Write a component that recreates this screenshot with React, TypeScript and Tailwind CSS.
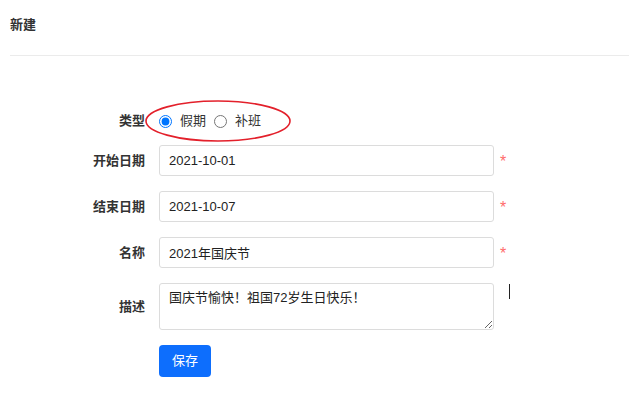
import React from "react";

const Field = ({ label, value }: { label: string; value: string }) => (
  <div className="flex items-center mt-[15px]">
    <label className="w-[145px] pr-0 text-right font-bold text-[#333]">{label}</label>
    <input
      type="text"
      defaultValue={value}
      className="ml-[14px] h-[31px] w-[335px] rounded-[3px] border border-[#dcdcdc] px-[9px] text-[13px] text-[#222] outline-none"
    />
    <span className="ml-[6px] self-start pt-[9px] text-[16px] leading-none text-[#ff6b6b]">*</span>
  </div>
);

export default function App() {
  return (
    <div
      className="min-h-[416px] bg-white text-[13px] text-[#333]"
      style={{ fontFamily: '"Liberation Sans", "Noto Sans CJK SC", sans-serif' }}
    >
      <div className="ml-[10px] h-[56px] border-b border-[#ebebeb] pt-[15px] font-bold leading-[20px]">
        新建
      </div>

      <form className="pt-[50px]" onSubmit={(e) => e.preventDefault()}>
        <div className="flex h-[30px] items-center">
          <label className="w-[145px] text-right font-bold">类型</label>
          <div className="relative ml-[14px] flex items-center">
            <label className="flex items-center">
              <input type="radio" name="kind" defaultChecked className="m-0 mr-[8px] h-[13px] w-[13px]" />
              <span>假期</span>
            </label>
            <label className="ml-[8px] flex items-center">
              <input type="radio" name="kind" className="m-0 mr-[8px] h-[13px] w-[13px]" />
              <span>补班</span>
            </label>
            <svg
              className="pointer-events-none absolute left-[-14px] top-1/2 -translate-y-1/2"
              width="148"
              height="44"
              viewBox="0 0 148 44"
            >
              <ellipse cx="73" cy="22" rx="72" ry="20" fill="none" stroke="#e3202b" strokeWidth="1.6" />
            </svg>
          </div>
        </div>

        <div className="mt-[-6px]">
          <Field label="开始日期" value="2021-10-01" />
        </div>
        <Field label="结束日期" value="2021-10-07" />
        <Field label="名称" value="2021年国庆节" />

        <div className="mt-[15px] flex items-center">
          <label className="w-[145px] text-right font-bold">描述</label>
          <textarea
            defaultValue="国庆节愉快！祖国72岁生日快乐！"
            className="ml-[14px] h-[47px] w-[335px] rounded-[3px] border border-[#dcdcdc] px-[9px] py-[4px] text-[13px] leading-[20px] text-[#222] outline-none"
          />
          <span className="ml-[15px] self-start mt-[1px] h-[15px] w-[1px] bg-[#222]" />
        </div>

        <div className="mt-[15px] pl-[159px]">
          <button
            type="submit"
            className="h-[32px] w-[52px] rounded-[4px] bg-[#0d6efd] text-[13px] text-white"
          >
            保存
          </button>
        </div>
      </form>
    </div>
  );
}
